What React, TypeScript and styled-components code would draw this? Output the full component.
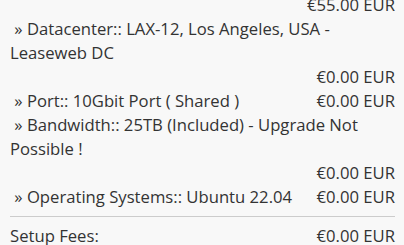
import React from "react";
import styled, { createGlobalStyle } from "styled-components";

const Global = createGlobalStyle`
  html, body {
    margin: 0;
    padding: 0;
    background: #f8f8f8;
  }
  body {
    font-family: "Open Sans", "Liberation Sans", sans-serif;
    font-size: 16.66px;
    line-height: 24px;
    color: #333333;
    overflow: hidden;
  }
`;

const Summary = styled.div`
  width: 404px;
  box-sizing: border-box;
  padding: 0 9px 0 10px;
  margin-top: -7px;
`;

const Row = styled.div`
  display: flex;
  flex-wrap: wrap;
  justify-content: space-between;
`;

const Label = styled.span`
  max-width: 100%;
`;

const Price = styled.span`
  margin-left: auto;
  white-space: nowrap;
`;

const Totals = styled.div`
  margin-top: 7px;
  border-top: 1px solid #cccccc;
  padding-top: 7px;
`;

const items: { label: string; price: string }[] = [
  { label: "\u00a0» Datacenter:: LAX-12, Los Angeles, USA - Leaseweb DC", price: "€0.00 EUR" },
  { label: "\u00a0» Port:: 10Gbit Port ( Shared )", price: "€0.00 EUR" },
  { label: "\u00a0» Bandwidth:: 25TB (Included) - Upgrade Not Possible !", price: "€0.00 EUR" },
  { label: "\u00a0» Operating Systems:: Ubuntu 22.04", price: "€0.00 EUR" },
];

export default function App() {
  return (
    <>
      <Global />
      <Summary>
        <Row>
          <Price>€55.00 EUR</Price>
        </Row>
        {items.map((it) => (
          <Row key={it.label}>
            <Label>{it.label}</Label>
            <Price>{it.price}</Price>
          </Row>
        ))}
        <Totals>
          <Row>
            <Label>Setup Fees:</Label>
            <Price>€0.00 EUR</Price>
          </Row>
        </Totals>
      </Summary>
    </>
  );
}
